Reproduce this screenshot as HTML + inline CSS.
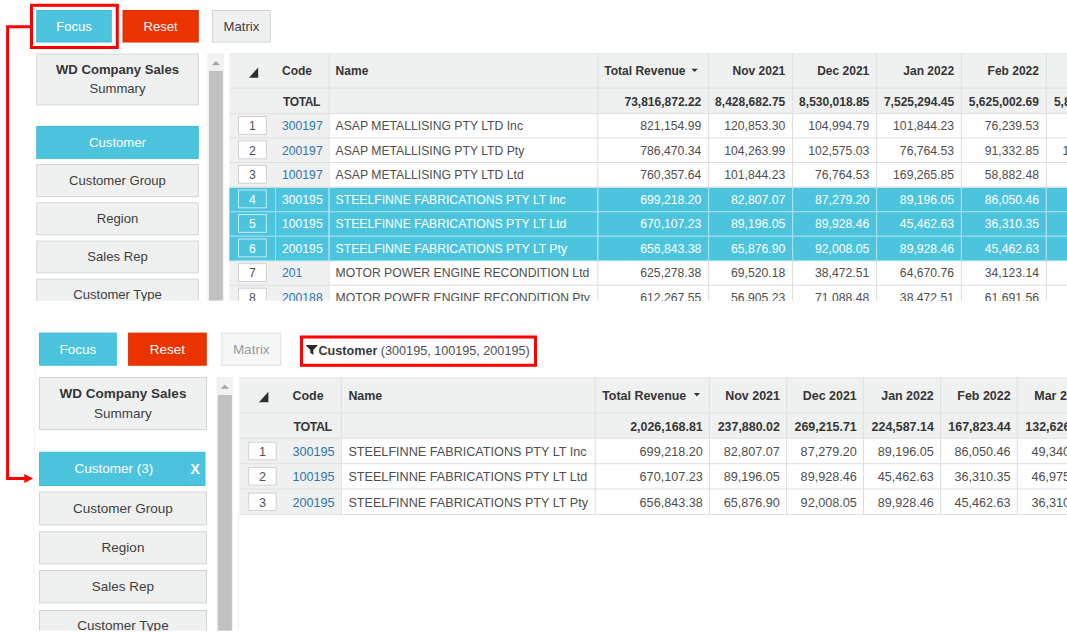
<!DOCTYPE html>
<html><head><meta charset="utf-8"><title>Focus</title>
<style>
html,body{margin:0;padding:0;background:#fff;}
body{width:1067px;height:633px;overflow:hidden;position:relative;font-family:"Liberation Sans",sans-serif;color:#4e4e4e;}
div,svg{position:absolute;white-space:nowrap;}
.clip{overflow:hidden;}
</style></head><body>
<svg style="left:0;top:0" width="1067" height="633" viewBox="0 0 1067 633"><defs><clipPath id="c1"><rect x="0" y="0" width="1067" height="300.7"/></clipPath></defs><g clip-path="url(#c1)"><rect x="36.75" y="10.50" width="74.50" height="31.50" fill="#4dc4de" stroke="#3fbcd8" stroke-width="1"/>
<rect x="123.00" y="10.50" width="75.25" height="31.50" fill="#eb3300" stroke="#de3000" stroke-width="1"/>
<rect x="212.50" y="10.50" width="57.80" height="31.50" fill="#eff0f0" stroke="#d3d5d5" stroke-width="1"/>
<rect x="36.75" y="54.10" width="161.50" height="50.90" fill="#eff0f0" stroke="#d3d5d5" stroke-width="1"/>
<rect x="36.75" y="126.40" width="161.50" height="32.00" fill="#4dc4de" stroke="#3fbcd8" stroke-width="1"/>
<rect x="36.75" y="164.60" width="161.50" height="32.10" fill="#eff0f0" stroke="#d3d5d5" stroke-width="1"/>
<rect x="36.75" y="202.80" width="161.50" height="32.00" fill="#eff0f0" stroke="#d3d5d5" stroke-width="1"/>
<rect x="36.75" y="241.00" width="161.50" height="31.90" fill="#eff0f0" stroke="#d3d5d5" stroke-width="1"/>
<rect x="36.75" y="279.20" width="161.50" height="32.00" fill="#eff0f0" stroke="#d3d5d5" stroke-width="1"/>
<rect x="207.30" y="53.40" width="16.70" height="247.30" fill="#f1f1f1"/>
<rect x="209.00" y="70.90" width="13.80" height="229.80" fill="#c1c1c1"/>
<polygon points="211.90,65.20 215.90,61.00 219.90,65.20" fill="#a6a6a6"/>
<rect x="229.40" y="53.40" width="837.60" height="59.70" fill="#eff0f0"/>
<rect x="229.40" y="113.10" width="99.20" height="187.60" fill="#eff0f0"/>
<rect x="229.40" y="187.60" width="837.60" height="24.50" fill="#4dc4de"/>
<rect x="229.40" y="212.10" width="837.60" height="24.50" fill="#4dc4de"/>
<rect x="229.40" y="236.60" width="837.60" height="24.50" fill="#4dc4de"/>
<rect x="229.40" y="87.60" width="837.60" height="1.00" fill="#dfe0e0"/>
<rect x="229.40" y="113.10" width="837.60" height="1.00" fill="#dfe0e0"/>
<rect x="229.40" y="137.50" width="99.20" height="1.00" fill="#dfe0e0"/>
<rect x="328.60" y="137.50" width="738.40" height="1.00" fill="#dcdddd"/>
<rect x="229.40" y="162.00" width="99.20" height="1.00" fill="#dfe0e0"/>
<rect x="328.60" y="162.00" width="738.40" height="1.00" fill="#dcdddd"/>
<rect x="229.40" y="186.60" width="99.20" height="1.00" fill="#dfe0e0"/>
<rect x="328.60" y="186.60" width="738.40" height="1.00" fill="#dcdddd"/>
<rect x="229.40" y="211.10" width="837.60" height="1.00" fill="#a2dfee"/>
<rect x="229.40" y="235.60" width="837.60" height="1.00" fill="#a2dfee"/>
<rect x="229.40" y="260.10" width="837.60" height="1.00" fill="#a2dfee"/>
<rect x="229.40" y="284.80" width="99.20" height="1.00" fill="#dfe0e0"/>
<rect x="328.60" y="284.80" width="738.40" height="1.00" fill="#dcdddd"/>
<rect x="229.40" y="53.40" width="837.60" height="1.00" fill="#e6e7e7"/>
<rect x="275.00" y="187.60" width="1.00" height="24.50" fill="#a2dfee"/>
<rect x="275.00" y="212.10" width="1.00" height="24.50" fill="#a2dfee"/>
<rect x="275.00" y="236.60" width="1.00" height="24.50" fill="#a2dfee"/>
<rect x="328.60" y="53.40" width="1.00" height="247.30" fill="#dfe0e0"/>
<rect x="328.60" y="187.60" width="1.00" height="24.50" fill="#a2dfee"/>
<rect x="328.60" y="212.10" width="1.00" height="24.50" fill="#a2dfee"/>
<rect x="328.60" y="236.60" width="1.00" height="24.50" fill="#a2dfee"/>
<rect x="597.30" y="53.40" width="1.00" height="59.70" fill="#dfe0e0"/>
<rect x="597.30" y="113.10" width="1.00" height="187.60" fill="#dcdddd"/>
<rect x="597.30" y="187.60" width="1.00" height="24.50" fill="#a2dfee"/>
<rect x="597.30" y="212.10" width="1.00" height="24.50" fill="#a2dfee"/>
<rect x="597.30" y="236.60" width="1.00" height="24.50" fill="#a2dfee"/>
<rect x="708.10" y="53.40" width="1.00" height="59.70" fill="#dfe0e0"/>
<rect x="708.10" y="113.10" width="1.00" height="187.60" fill="#dcdddd"/>
<rect x="708.10" y="187.60" width="1.00" height="24.50" fill="#a2dfee"/>
<rect x="708.10" y="212.10" width="1.00" height="24.50" fill="#a2dfee"/>
<rect x="708.10" y="236.60" width="1.00" height="24.50" fill="#a2dfee"/>
<rect x="792.10" y="53.40" width="1.00" height="59.70" fill="#dfe0e0"/>
<rect x="792.10" y="113.10" width="1.00" height="187.60" fill="#dcdddd"/>
<rect x="792.10" y="187.60" width="1.00" height="24.50" fill="#a2dfee"/>
<rect x="792.10" y="212.10" width="1.00" height="24.50" fill="#a2dfee"/>
<rect x="792.10" y="236.60" width="1.00" height="24.50" fill="#a2dfee"/>
<rect x="876.10" y="53.40" width="1.00" height="59.70" fill="#dfe0e0"/>
<rect x="876.10" y="113.10" width="1.00" height="187.60" fill="#dcdddd"/>
<rect x="876.10" y="187.60" width="1.00" height="24.50" fill="#a2dfee"/>
<rect x="876.10" y="212.10" width="1.00" height="24.50" fill="#a2dfee"/>
<rect x="876.10" y="236.60" width="1.00" height="24.50" fill="#a2dfee"/>
<rect x="960.90" y="53.40" width="1.00" height="59.70" fill="#dfe0e0"/>
<rect x="960.90" y="113.10" width="1.00" height="187.60" fill="#dcdddd"/>
<rect x="960.90" y="187.60" width="1.00" height="24.50" fill="#a2dfee"/>
<rect x="960.90" y="212.10" width="1.00" height="24.50" fill="#a2dfee"/>
<rect x="960.90" y="236.60" width="1.00" height="24.50" fill="#a2dfee"/>
<rect x="1045.80" y="53.40" width="1.00" height="59.70" fill="#dfe0e0"/>
<rect x="1045.80" y="113.10" width="1.00" height="187.60" fill="#dcdddd"/>
<rect x="1045.80" y="187.60" width="1.00" height="24.50" fill="#a2dfee"/>
<rect x="1045.80" y="212.10" width="1.00" height="24.50" fill="#a2dfee"/>
<rect x="1045.80" y="236.60" width="1.00" height="24.50" fill="#a2dfee"/>
<polygon points="249.00,77.70 258.20,67.40 258.20,77.70" fill="#2e2e2e"/>
<polygon points="691.40,68.80 697.80,68.80 694.60,72.00" fill="#333"/>
<rect x="238.50" y="116.50" width="27.80" height="17.80" fill="#fff" stroke="#d0d2d2" stroke-width="1"/>
<rect x="238.50" y="140.95" width="27.80" height="17.80" fill="#fff" stroke="#d0d2d2" stroke-width="1"/>
<rect x="238.50" y="165.50" width="27.80" height="17.80" fill="#fff" stroke="#d0d2d2" stroke-width="1"/>
<rect x="238.50" y="190.05" width="27.80" height="17.80" fill="none" stroke="#c4ebf4" stroke-width="1"/>
<rect x="238.50" y="214.55" width="27.80" height="17.80" fill="none" stroke="#c4ebf4" stroke-width="1"/>
<rect x="238.50" y="239.05" width="27.80" height="17.80" fill="none" stroke="#c4ebf4" stroke-width="1"/>
<rect x="238.50" y="263.65" width="27.80" height="17.80" fill="#fff" stroke="#d0d2d2" stroke-width="1"/>
<rect x="238.50" y="288.25" width="27.80" height="17.80" fill="#fff" stroke="#d0d2d2" stroke-width="1"/></g></svg>
<div class="clip" style="left:0;top:0px;width:1067px;height:300.7px"><div style="left:0;top:0px;width:1067px;height:633px"><div style="left:36.25px;top:10.00px;width:75.50px;height:32.50px;line-height:34.50px;color:#fff;text-align:center;font-size:13.1px;">Focus</div>
<div style="left:122.50px;top:10.00px;width:76.25px;height:32.50px;line-height:34.50px;color:#fff;text-align:center;font-size:13.1px;">Reset</div>
<div style="left:212.00px;top:10.00px;width:58.80px;height:32.50px;line-height:34.50px;color:#3e3e3e;text-align:center;font-size:13.1px;">Matrix</div>
<div style="left:36.25px;top:60.00px;width:162.50px;height:20.00px;line-height:20.00px;text-align:center;font-size:13.1px;color:#363636;"><b>WD Company Sales</b></div>
<div style="left:36.25px;top:79.00px;width:162.50px;height:20.00px;line-height:20.00px;text-align:center;font-size:13.1px;color:#3e3e3e;">Summary</div>
<div style="left:36.25px;top:125.90px;width:162.50px;height:33.00px;line-height:33.00px;text-align:center;font-size:13.1px;color:#3e3e3e;color:#fff;">Customer</div>
<div style="left:36.25px;top:164.10px;width:162.50px;height:33.10px;line-height:33.10px;text-align:center;font-size:13.1px;color:#3e3e3e;">Customer Group</div>
<div style="left:36.25px;top:202.30px;width:162.50px;height:33.00px;line-height:33.00px;text-align:center;font-size:13.1px;color:#3e3e3e;">Region</div>
<div style="left:36.25px;top:240.50px;width:162.50px;height:32.90px;line-height:32.90px;text-align:center;font-size:13.1px;color:#3e3e3e;">Sales Rep</div>
<div style="left:36.25px;top:278.70px;width:162.50px;height:33.00px;line-height:31.00px;text-align:center;font-size:13.1px;color:#3e3e3e;">Customer Type</div>
<div style="left:282.00px;top:53.40px;width:46.60px;height:34.20px;line-height:37.20px;font-size:12.02px;color:#363636;font-weight:bold;">Code</div>
<div style="left:335.60px;top:53.40px;width:261.70px;height:34.20px;line-height:37.20px;font-size:12.02px;color:#363636;font-weight:bold;">Name</div>
<div style="left:604.30px;top:53.40px;width:103.80px;height:34.20px;line-height:37.20px;font-size:12.02px;color:#363636;font-weight:bold;">Total Revenue</div>
<div style="left:708.10px;top:53.40px;width:77.20px;height:34.20px;line-height:37.20px;font-size:12.02px;color:#363636;font-weight:bold;text-align:right;">Nov 2021</div>
<div style="left:792.10px;top:53.40px;width:77.20px;height:34.20px;line-height:37.20px;font-size:12.02px;color:#363636;font-weight:bold;text-align:right;">Dec 2021</div>
<div style="left:876.10px;top:53.40px;width:78.00px;height:34.20px;line-height:37.20px;font-size:12.02px;color:#363636;font-weight:bold;text-align:right;">Jan 2022</div>
<div style="left:960.90px;top:53.40px;width:78.10px;height:34.20px;line-height:37.20px;font-size:12.02px;color:#363636;font-weight:bold;text-align:right;">Feb 2022</div>
<div style="left:1045.80px;top:53.40px;width:77.60px;height:34.20px;line-height:37.20px;font-size:12.02px;color:#363636;font-weight:bold;text-align:right;">Mar 2022</div>
<div style="left:282.00px;top:87.60px;width:46.60px;height:25.50px;line-height:29.00px;font-size:12.02px;color:#363636;font-weight:bold;"><span style="letter-spacing:-0.4px;margin-left:1px">TOTAL</span></div>
<div style="left:597.30px;top:87.60px;width:104.00px;height:25.50px;line-height:29.00px;font-size:12.02px;color:#363636;font-weight:bold;text-align:right;">73,816,872.22</div>
<div style="left:708.10px;top:87.60px;width:77.20px;height:25.50px;line-height:29.00px;font-size:12.02px;color:#363636;font-weight:bold;text-align:right;">8,428,682.75</div>
<div style="left:792.10px;top:87.60px;width:77.20px;height:25.50px;line-height:29.00px;font-size:12.02px;color:#363636;font-weight:bold;text-align:right;">8,530,018.85</div>
<div style="left:876.10px;top:87.60px;width:78.00px;height:25.50px;line-height:29.00px;font-size:12.02px;color:#363636;font-weight:bold;text-align:right;">7,525,294.45</div>
<div style="left:960.90px;top:87.60px;width:78.10px;height:25.50px;line-height:29.00px;font-size:12.02px;color:#363636;font-weight:bold;text-align:right;">5,625,002.69</div>
<div style="left:1045.80px;top:87.60px;width:77.60px;height:25.50px;line-height:29.00px;font-size:12.02px;color:#363636;font-weight:bold;text-align:right;">5,832,114.20</div>
<div style="left:238.00px;top:113.10px;width:28.80px;height:24.40px;line-height:26.00px;text-align:center;font-size:12.2px;color:#4e4e4e;">1</div>
<div style="left:282.00px;top:113.10px;width:46.60px;height:24.40px;line-height:26.00px;font-size:12.2px;color:#2e75ad;">300197</div>
<div style="left:335.60px;top:113.10px;width:261.70px;height:24.40px;line-height:26.00px;font-size:12.2px;color:#4e4e4e;">ASAP METALLISING PTY LTD Inc</div>
<div style="left:597.30px;top:113.10px;width:104.00px;height:24.40px;line-height:26.00px;font-size:12.2px;color:#4e4e4e;text-align:right;">821,154.99</div>
<div style="left:708.10px;top:113.10px;width:77.20px;height:24.40px;line-height:26.00px;font-size:12.2px;color:#4e4e4e;text-align:right;">120,853.30</div>
<div style="left:792.10px;top:113.10px;width:77.20px;height:24.40px;line-height:26.00px;font-size:12.2px;color:#4e4e4e;text-align:right;">104,994.79</div>
<div style="left:876.10px;top:113.10px;width:78.00px;height:24.40px;line-height:26.00px;font-size:12.2px;color:#4e4e4e;text-align:right;">101,844.23</div>
<div style="left:960.90px;top:113.10px;width:78.10px;height:24.40px;line-height:26.00px;font-size:12.2px;color:#4e4e4e;text-align:right;">76,239.53</div>
<div style="left:1045.80px;top:113.10px;width:77.60px;height:24.40px;line-height:26.00px;font-size:12.2px;color:#4e4e4e;text-align:right;">88,213.10</div>
<div style="left:238.00px;top:137.50px;width:28.80px;height:24.50px;line-height:26.10px;text-align:center;font-size:12.2px;color:#4e4e4e;">2</div>
<div style="left:282.00px;top:137.50px;width:46.60px;height:24.50px;line-height:26.10px;font-size:12.2px;color:#2e75ad;">200197</div>
<div style="left:335.60px;top:137.50px;width:261.70px;height:24.50px;line-height:26.10px;font-size:12.2px;color:#4e4e4e;">ASAP METALLISING PTY LTD Pty</div>
<div style="left:597.30px;top:137.50px;width:104.00px;height:24.50px;line-height:26.10px;font-size:12.2px;color:#4e4e4e;text-align:right;">786,470.34</div>
<div style="left:708.10px;top:137.50px;width:77.20px;height:24.50px;line-height:26.10px;font-size:12.2px;color:#4e4e4e;text-align:right;">104,263.99</div>
<div style="left:792.10px;top:137.50px;width:77.20px;height:24.50px;line-height:26.10px;font-size:12.2px;color:#4e4e4e;text-align:right;">102,575.03</div>
<div style="left:876.10px;top:137.50px;width:78.00px;height:24.50px;line-height:26.10px;font-size:12.2px;color:#4e4e4e;text-align:right;">76,764.53</div>
<div style="left:960.90px;top:137.50px;width:78.10px;height:24.50px;line-height:26.10px;font-size:12.2px;color:#4e4e4e;text-align:right;">91,332.85</div>
<div style="left:1045.80px;top:137.50px;width:77.60px;height:24.50px;line-height:26.10px;font-size:12.2px;color:#4e4e4e;text-align:right;">101,844.23</div>
<div style="left:238.00px;top:162.00px;width:28.80px;height:24.60px;line-height:26.20px;text-align:center;font-size:12.2px;color:#4e4e4e;">3</div>
<div style="left:282.00px;top:162.00px;width:46.60px;height:24.60px;line-height:26.20px;font-size:12.2px;color:#2e75ad;">100197</div>
<div style="left:335.60px;top:162.00px;width:261.70px;height:24.60px;line-height:26.20px;font-size:12.2px;color:#4e4e4e;">ASAP METALLISING PTY LTD Ltd</div>
<div style="left:597.30px;top:162.00px;width:104.00px;height:24.60px;line-height:26.20px;font-size:12.2px;color:#4e4e4e;text-align:right;">760,357.64</div>
<div style="left:708.10px;top:162.00px;width:77.20px;height:24.60px;line-height:26.20px;font-size:12.2px;color:#4e4e4e;text-align:right;">101,844.23</div>
<div style="left:792.10px;top:162.00px;width:77.20px;height:24.60px;line-height:26.20px;font-size:12.2px;color:#4e4e4e;text-align:right;">76,764.53</div>
<div style="left:876.10px;top:162.00px;width:78.00px;height:24.60px;line-height:26.20px;font-size:12.2px;color:#4e4e4e;text-align:right;">169,265.85</div>
<div style="left:960.90px;top:162.00px;width:78.10px;height:24.60px;line-height:26.20px;font-size:12.2px;color:#4e4e4e;text-align:right;">58,882.48</div>
<div style="left:1045.80px;top:162.00px;width:77.60px;height:24.60px;line-height:26.20px;font-size:12.2px;color:#4e4e4e;text-align:right;">64,670.76</div>
<div style="left:238.00px;top:186.60px;width:28.80px;height:24.50px;line-height:26.10px;text-align:center;font-size:12.2px;color:#fff;">4</div>
<div style="left:282.00px;top:186.60px;width:46.60px;height:24.50px;line-height:26.10px;font-size:12.2px;color:#fff;">300195</div>
<div style="left:335.60px;top:186.60px;width:261.70px;height:24.50px;line-height:26.10px;font-size:12.2px;color:#fff;">STEELFINNE FABRICATIONS PTY LT Inc</div>
<div style="left:597.30px;top:186.60px;width:104.00px;height:24.50px;line-height:26.10px;font-size:12.2px;color:#fff;text-align:right;">699,218.20</div>
<div style="left:708.10px;top:186.60px;width:77.20px;height:24.50px;line-height:26.10px;font-size:12.2px;color:#fff;text-align:right;">82,807.07</div>
<div style="left:792.10px;top:186.60px;width:77.20px;height:24.50px;line-height:26.10px;font-size:12.2px;color:#fff;text-align:right;">87,279.20</div>
<div style="left:876.10px;top:186.60px;width:78.00px;height:24.50px;line-height:26.10px;font-size:12.2px;color:#fff;text-align:right;">89,196.05</div>
<div style="left:960.90px;top:186.60px;width:78.10px;height:24.50px;line-height:26.10px;font-size:12.2px;color:#fff;text-align:right;">86,050.46</div>
<div style="left:1045.80px;top:186.60px;width:77.60px;height:24.50px;line-height:26.10px;font-size:12.2px;color:#fff;text-align:right;">49,340.12</div>
<div style="left:238.00px;top:211.10px;width:28.80px;height:24.50px;line-height:26.10px;text-align:center;font-size:12.2px;color:#fff;">5</div>
<div style="left:282.00px;top:211.10px;width:46.60px;height:24.50px;line-height:26.10px;font-size:12.2px;color:#fff;">100195</div>
<div style="left:335.60px;top:211.10px;width:261.70px;height:24.50px;line-height:26.10px;font-size:12.2px;color:#fff;">STEELFINNE FABRICATIONS PTY LT Ltd</div>
<div style="left:597.30px;top:211.10px;width:104.00px;height:24.50px;line-height:26.10px;font-size:12.2px;color:#fff;text-align:right;">670,107.23</div>
<div style="left:708.10px;top:211.10px;width:77.20px;height:24.50px;line-height:26.10px;font-size:12.2px;color:#fff;text-align:right;">89,196.05</div>
<div style="left:792.10px;top:211.10px;width:77.20px;height:24.50px;line-height:26.10px;font-size:12.2px;color:#fff;text-align:right;">89,928.46</div>
<div style="left:876.10px;top:211.10px;width:78.00px;height:24.50px;line-height:26.10px;font-size:12.2px;color:#fff;text-align:right;">45,462.63</div>
<div style="left:960.90px;top:211.10px;width:78.10px;height:24.50px;line-height:26.10px;font-size:12.2px;color:#fff;text-align:right;">36,310.35</div>
<div style="left:1045.80px;top:211.10px;width:77.60px;height:24.50px;line-height:26.10px;font-size:12.2px;color:#fff;text-align:right;">46,975.30</div>
<div style="left:238.00px;top:235.60px;width:28.80px;height:24.50px;line-height:26.10px;text-align:center;font-size:12.2px;color:#fff;">6</div>
<div style="left:282.00px;top:235.60px;width:46.60px;height:24.50px;line-height:26.10px;font-size:12.2px;color:#fff;">200195</div>
<div style="left:335.60px;top:235.60px;width:261.70px;height:24.50px;line-height:26.10px;font-size:12.2px;color:#fff;">STEELFINNE FABRICATIONS PTY LT Pty</div>
<div style="left:597.30px;top:235.60px;width:104.00px;height:24.50px;line-height:26.10px;font-size:12.2px;color:#fff;text-align:right;">656,843.38</div>
<div style="left:708.10px;top:235.60px;width:77.20px;height:24.50px;line-height:26.10px;font-size:12.2px;color:#fff;text-align:right;">65,876.90</div>
<div style="left:792.10px;top:235.60px;width:77.20px;height:24.50px;line-height:26.10px;font-size:12.2px;color:#fff;text-align:right;">92,008.05</div>
<div style="left:876.10px;top:235.60px;width:78.00px;height:24.50px;line-height:26.10px;font-size:12.2px;color:#fff;text-align:right;">89,928.46</div>
<div style="left:960.90px;top:235.60px;width:78.10px;height:24.50px;line-height:26.10px;font-size:12.2px;color:#fff;text-align:right;">45,462.63</div>
<div style="left:1045.80px;top:235.60px;width:77.60px;height:24.50px;line-height:26.10px;font-size:12.2px;color:#fff;text-align:right;">36,310.35</div>
<div style="left:238.00px;top:260.10px;width:28.80px;height:24.70px;line-height:26.30px;text-align:center;font-size:12.2px;color:#4e4e4e;">7</div>
<div style="left:282.00px;top:260.10px;width:46.60px;height:24.70px;line-height:26.30px;font-size:12.2px;color:#2e75ad;">201</div>
<div style="left:335.60px;top:260.10px;width:261.70px;height:24.70px;line-height:26.30px;font-size:12.2px;color:#4e4e4e;">MOTOR POWER ENGINE RECONDITION Ltd</div>
<div style="left:597.30px;top:260.10px;width:104.00px;height:24.70px;line-height:26.30px;font-size:12.2px;color:#4e4e4e;text-align:right;">625,278.38</div>
<div style="left:708.10px;top:260.10px;width:77.20px;height:24.70px;line-height:26.30px;font-size:12.2px;color:#4e4e4e;text-align:right;">69,520.18</div>
<div style="left:792.10px;top:260.10px;width:77.20px;height:24.70px;line-height:26.30px;font-size:12.2px;color:#4e4e4e;text-align:right;">38,472.51</div>
<div style="left:876.10px;top:260.10px;width:78.00px;height:24.70px;line-height:26.30px;font-size:12.2px;color:#4e4e4e;text-align:right;">64,670.76</div>
<div style="left:960.90px;top:260.10px;width:78.10px;height:24.70px;line-height:26.30px;font-size:12.2px;color:#4e4e4e;text-align:right;">34,123.14</div>
<div style="left:1045.80px;top:260.10px;width:77.60px;height:24.70px;line-height:26.30px;font-size:12.2px;color:#4e4e4e;text-align:right;">56,905.23</div>
<div style="left:238.00px;top:284.80px;width:28.80px;height:24.50px;line-height:26.10px;text-align:center;font-size:12.2px;color:#4e4e4e;">8</div>
<div style="left:282.00px;top:284.80px;width:46.60px;height:24.50px;line-height:26.10px;font-size:12.2px;color:#2e75ad;">200188</div>
<div style="left:335.60px;top:284.80px;width:261.70px;height:24.50px;line-height:26.10px;font-size:12.2px;color:#4e4e4e;">MOTOR POWER ENGINE RECONDITION Pty</div>
<div style="left:597.30px;top:284.80px;width:104.00px;height:24.50px;line-height:26.10px;font-size:12.2px;color:#4e4e4e;text-align:right;">612,267.55</div>
<div style="left:708.10px;top:284.80px;width:77.20px;height:24.50px;line-height:26.10px;font-size:12.2px;color:#4e4e4e;text-align:right;">56,905.23</div>
<div style="left:792.10px;top:284.80px;width:77.20px;height:24.50px;line-height:26.10px;font-size:12.2px;color:#4e4e4e;text-align:right;">71,088.48</div>
<div style="left:876.10px;top:284.80px;width:78.00px;height:24.50px;line-height:26.10px;font-size:12.2px;color:#4e4e4e;text-align:right;">38,472.51</div>
<div style="left:960.90px;top:284.80px;width:78.10px;height:24.50px;line-height:26.10px;font-size:12.2px;color:#4e4e4e;text-align:right;">61,691.56</div>
<div style="left:1045.80px;top:284.80px;width:77.60px;height:24.50px;line-height:26.10px;font-size:12.2px;color:#4e4e4e;text-align:right;">69,520.18</div></div></div>
<svg style="left:0;top:0" width="1067" height="633" viewBox="0 0 1067 633"><defs><clipPath id="c2"><rect x="0" y="320" width="1067" height="310.79999999999995"/></clipPath></defs><g clip-path="url(#c2)"><rect x="33.3" y="325" width="2.5" height="306" fill="#fafafa"/>
<rect x="238.2" y="514" width="1" height="117" fill="#eeefef"/>
<rect x="39.50" y="333.10" width="76.80" height="32.10" fill="#4dc4de" stroke="#3fbcd8" stroke-width="1"/>
<rect x="128.60" y="333.10" width="77.65" height="32.10" fill="#eb3300" stroke="#de3000" stroke-width="1"/>
<rect x="221.75" y="333.10" width="59.00" height="32.10" fill="#f6f7f7" stroke="#dddfdf" stroke-width="1"/>
<rect x="39.50" y="377.50" width="167.00" height="52.25" fill="#eff0f0" stroke="#d3d5d5" stroke-width="1"/>
<rect x="39.50" y="452.25" width="165.50" height="33.25" fill="#4dc4de" stroke="#3fbcd8" stroke-width="1"/>
<rect x="185.00" y="452.75" width="1.00" height="32.25" fill="#44bcd8"/>
<rect x="39.50" y="492.00" width="167.00" height="33.00" fill="#eff0f0" stroke="#d3d5d5" stroke-width="1"/>
<rect x="39.50" y="531.75" width="167.00" height="32.00" fill="#eff0f0" stroke="#d3d5d5" stroke-width="1"/>
<rect x="39.50" y="570.50" width="167.00" height="32.50" fill="#eff0f0" stroke="#d3d5d5" stroke-width="1"/>
<rect x="39.50" y="610.50" width="167.00" height="33.00" fill="#eff0f0" stroke="#d3d5d5" stroke-width="1"/>
<rect x="216.50" y="377.00" width="16.50" height="253.80" fill="#f1f1f1"/>
<rect x="217.80" y="395.00" width="14.10" height="235.80" fill="#c1c1c1"/>
<polygon points="220.75,388.80 224.85,384.50 228.95,388.80" fill="#a6a6a6"/>
<rect x="239.20" y="377.00" width="827.80" height="60.80" fill="#eff0f0"/>
<rect x="239.20" y="437.80" width="101.70" height="76.30" fill="#eff0f0"/>
<rect x="239.20" y="412.50" width="827.80" height="1.00" fill="#dfe0e0"/>
<rect x="239.20" y="437.80" width="827.80" height="1.00" fill="#dfe0e0"/>
<rect x="239.20" y="463.20" width="101.70" height="1.00" fill="#dfe0e0"/>
<rect x="340.90" y="463.20" width="726.10" height="1.00" fill="#dcdddd"/>
<rect x="239.20" y="488.50" width="101.70" height="1.00" fill="#dfe0e0"/>
<rect x="340.90" y="488.50" width="726.10" height="1.00" fill="#dcdddd"/>
<rect x="239.20" y="514.10" width="101.70" height="1.00" fill="#dfe0e0"/>
<rect x="340.90" y="514.10" width="726.10" height="1.00" fill="#dcdddd"/>
<rect x="239.20" y="377.00" width="827.80" height="1.00" fill="#e6e7e7"/>
<rect x="340.90" y="377.00" width="1.00" height="137.10" fill="#dfe0e0"/>
<rect x="594.70" y="377.00" width="1.00" height="60.80" fill="#dfe0e0"/>
<rect x="594.70" y="437.80" width="1.00" height="76.30" fill="#dcdddd"/>
<rect x="709.00" y="377.00" width="1.00" height="60.80" fill="#dfe0e0"/>
<rect x="709.00" y="437.80" width="1.00" height="76.30" fill="#dcdddd"/>
<rect x="786.10" y="377.00" width="1.00" height="60.80" fill="#dfe0e0"/>
<rect x="786.10" y="437.80" width="1.00" height="76.30" fill="#dcdddd"/>
<rect x="863.00" y="377.00" width="1.00" height="60.80" fill="#dfe0e0"/>
<rect x="863.00" y="437.80" width="1.00" height="76.30" fill="#dcdddd"/>
<rect x="940.00" y="377.00" width="1.00" height="60.80" fill="#dfe0e0"/>
<rect x="940.00" y="437.80" width="1.00" height="76.30" fill="#dcdddd"/>
<rect x="1016.80" y="377.00" width="1.00" height="60.80" fill="#dfe0e0"/>
<rect x="1016.80" y="437.80" width="1.00" height="76.30" fill="#dcdddd"/>
<polygon points="259.00,402.30 268.40,391.70 268.40,402.30" fill="#2e2e2e"/>
<polygon points="693.90,392.90 699.90,392.90 696.90,396.40" fill="#333"/>
<rect x="248.70" y="442.25" width="27.50" height="17.50" fill="#fff" stroke="#d0d2d2" stroke-width="1"/>
<rect x="248.70" y="467.60" width="27.50" height="17.50" fill="#fff" stroke="#d0d2d2" stroke-width="1"/>
<rect x="248.70" y="493.05" width="27.50" height="17.50" fill="#fff" stroke="#d0d2d2" stroke-width="1"/></g></svg>
<div class="clip" style="left:0;top:320px;width:1067px;height:310.79999999999995px"><div style="left:0;top:-320px;width:1067px;height:633px"><div style="left:39.00px;top:332.60px;width:77.80px;height:33.10px;line-height:33.10px;color:#fff;text-align:center;font-size:13.5px;">Focus</div>
<div style="left:128.10px;top:332.60px;width:78.65px;height:33.10px;line-height:33.10px;color:#fff;text-align:center;font-size:13.5px;">Reset</div>
<div style="left:221.25px;top:332.60px;width:60.00px;height:33.10px;line-height:33.10px;color:#9a9a9a;text-align:center;font-size:13.5px;">Matrix</div>
<div style="left:39.00px;top:384.00px;width:168.00px;height:20.00px;line-height:20.00px;text-align:center;font-size:13.5px;color:#363636;"><b>WD Company Sales</b></div>
<div style="left:39.00px;top:403.50px;width:168.00px;height:20.00px;line-height:20.00px;text-align:center;font-size:13.5px;color:#3e3e3e;">Summary</div>
<div style="left:39.00px;top:451.75px;width:149.80px;height:34.25px;line-height:34.25px;text-align:center;font-size:13.5px;color:#3e3e3e;color:#fff;">Customer (3)</div>
<div style="left:185.00px;top:451.75px;width:20.50px;height:34.25px;line-height:34.25px;text-align:center;font-size:13.5px;color:#3e3e3e;color:#fff;font-weight:bold;font-size:14px;">X</div>
<div style="left:39.00px;top:491.50px;width:168.00px;height:34.00px;line-height:34.00px;text-align:center;font-size:13.5px;color:#3e3e3e;">Customer Group</div>
<div style="left:39.00px;top:531.25px;width:168.00px;height:33.00px;line-height:33.00px;text-align:center;font-size:13.5px;color:#3e3e3e;">Region</div>
<div style="left:39.00px;top:570.00px;width:168.00px;height:33.50px;line-height:33.50px;text-align:center;font-size:13.5px;color:#3e3e3e;">Sales Rep</div>
<div style="left:39.00px;top:610.00px;width:168.00px;height:34.00px;line-height:32.00px;text-align:center;font-size:13.5px;color:#3e3e3e;">Customer Type</div>
<div style="left:292.50px;top:377.00px;width:48.40px;height:35.50px;line-height:39.50px;font-size:12.44px;color:#363636;font-weight:bold;">Code</div>
<div style="left:348.40px;top:377.00px;width:246.30px;height:35.50px;line-height:39.50px;font-size:12.44px;color:#363636;font-weight:bold;">Name</div>
<div style="left:602.20px;top:377.00px;width:106.80px;height:35.50px;line-height:39.50px;font-size:12.44px;color:#363636;font-weight:bold;">Total Revenue</div>
<div style="left:709.00px;top:377.00px;width:70.90px;height:35.50px;line-height:39.50px;font-size:12.44px;color:#363636;font-weight:bold;text-align:right;">Nov 2021</div>
<div style="left:786.10px;top:377.00px;width:70.70px;height:35.50px;line-height:39.50px;font-size:12.44px;color:#363636;font-weight:bold;text-align:right;">Dec 2021</div>
<div style="left:863.00px;top:377.00px;width:70.80px;height:35.50px;line-height:39.50px;font-size:12.44px;color:#363636;font-weight:bold;text-align:right;">Jan 2022</div>
<div style="left:940.00px;top:377.00px;width:70.60px;height:35.50px;line-height:39.50px;font-size:12.44px;color:#363636;font-weight:bold;text-align:right;">Feb 2022</div>
<div style="left:1016.80px;top:377.00px;width:70.80px;height:35.50px;line-height:39.50px;font-size:12.44px;color:#363636;font-weight:bold;text-align:right;">Mar 2022</div>
<div style="left:292.50px;top:412.50px;width:48.40px;height:25.30px;line-height:29.30px;font-size:12.44px;color:#363636;font-weight:bold;"><span style="letter-spacing:-0.4px;margin-left:1px">TOTAL</span></div>
<div style="left:594.70px;top:412.50px;width:108.10px;height:25.30px;line-height:29.30px;font-size:12.44px;color:#363636;font-weight:bold;text-align:right;">2,026,168.81</div>
<div style="left:709.00px;top:412.50px;width:70.90px;height:25.30px;line-height:29.30px;font-size:12.44px;color:#363636;font-weight:bold;text-align:right;">237,880.02</div>
<div style="left:786.10px;top:412.50px;width:70.70px;height:25.30px;line-height:29.30px;font-size:12.44px;color:#363636;font-weight:bold;text-align:right;">269,215.71</div>
<div style="left:863.00px;top:412.50px;width:70.80px;height:25.30px;line-height:29.30px;font-size:12.44px;color:#363636;font-weight:bold;text-align:right;">224,587.14</div>
<div style="left:940.00px;top:412.50px;width:70.60px;height:25.30px;line-height:29.30px;font-size:12.44px;color:#363636;font-weight:bold;text-align:right;">167,823.44</div>
<div style="left:1016.80px;top:412.50px;width:70.80px;height:25.30px;line-height:29.30px;font-size:12.44px;color:#363636;font-weight:bold;text-align:right;">132,626.17</div>
<div style="left:248.20px;top:437.80px;width:28.50px;height:25.40px;line-height:29.40px;text-align:center;font-size:12.63px;color:#4e4e4e;">1</div>
<div style="left:292.50px;top:437.80px;width:48.40px;height:25.40px;line-height:29.40px;font-size:12.63px;color:#2e75ad;">300195</div>
<div style="left:348.40px;top:437.80px;width:246.30px;height:25.40px;line-height:29.40px;font-size:12.63px;color:#4e4e4e;">STEELFINNE FABRICATIONS PTY LT Inc</div>
<div style="left:594.70px;top:437.80px;width:108.10px;height:25.40px;line-height:29.40px;font-size:12.63px;color:#4e4e4e;text-align:right;">699,218.20</div>
<div style="left:709.00px;top:437.80px;width:70.90px;height:25.40px;line-height:29.40px;font-size:12.63px;color:#4e4e4e;text-align:right;">82,807.07</div>
<div style="left:786.10px;top:437.80px;width:70.70px;height:25.40px;line-height:29.40px;font-size:12.63px;color:#4e4e4e;text-align:right;">87,279.20</div>
<div style="left:863.00px;top:437.80px;width:70.80px;height:25.40px;line-height:29.40px;font-size:12.63px;color:#4e4e4e;text-align:right;">89,196.05</div>
<div style="left:940.00px;top:437.80px;width:70.60px;height:25.40px;line-height:29.40px;font-size:12.63px;color:#4e4e4e;text-align:right;">86,050.46</div>
<div style="left:1016.80px;top:437.80px;width:70.80px;height:25.40px;line-height:29.40px;font-size:12.63px;color:#4e4e4e;text-align:right;">49,340.12</div>
<div style="left:248.20px;top:463.20px;width:28.50px;height:25.30px;line-height:29.30px;text-align:center;font-size:12.63px;color:#4e4e4e;">2</div>
<div style="left:292.50px;top:463.20px;width:48.40px;height:25.30px;line-height:29.30px;font-size:12.63px;color:#2e75ad;">100195</div>
<div style="left:348.40px;top:463.20px;width:246.30px;height:25.30px;line-height:29.30px;font-size:12.63px;color:#4e4e4e;">STEELFINNE FABRICATIONS PTY LT Ltd</div>
<div style="left:594.70px;top:463.20px;width:108.10px;height:25.30px;line-height:29.30px;font-size:12.63px;color:#4e4e4e;text-align:right;">670,107.23</div>
<div style="left:709.00px;top:463.20px;width:70.90px;height:25.30px;line-height:29.30px;font-size:12.63px;color:#4e4e4e;text-align:right;">89,196.05</div>
<div style="left:786.10px;top:463.20px;width:70.70px;height:25.30px;line-height:29.30px;font-size:12.63px;color:#4e4e4e;text-align:right;">89,928.46</div>
<div style="left:863.00px;top:463.20px;width:70.80px;height:25.30px;line-height:29.30px;font-size:12.63px;color:#4e4e4e;text-align:right;">45,462.63</div>
<div style="left:940.00px;top:463.20px;width:70.60px;height:25.30px;line-height:29.30px;font-size:12.63px;color:#4e4e4e;text-align:right;">36,310.35</div>
<div style="left:1016.80px;top:463.20px;width:70.80px;height:25.30px;line-height:29.30px;font-size:12.63px;color:#4e4e4e;text-align:right;">46,975.30</div>
<div style="left:248.20px;top:488.50px;width:28.50px;height:25.60px;line-height:29.60px;text-align:center;font-size:12.63px;color:#4e4e4e;">3</div>
<div style="left:292.50px;top:488.50px;width:48.40px;height:25.60px;line-height:29.60px;font-size:12.63px;color:#2e75ad;">200195</div>
<div style="left:348.40px;top:488.50px;width:246.30px;height:25.60px;line-height:29.60px;font-size:12.63px;color:#4e4e4e;">STEELFINNE FABRICATIONS PTY LT Pty</div>
<div style="left:594.70px;top:488.50px;width:108.10px;height:25.60px;line-height:29.60px;font-size:12.63px;color:#4e4e4e;text-align:right;">656,843.38</div>
<div style="left:709.00px;top:488.50px;width:70.90px;height:25.60px;line-height:29.60px;font-size:12.63px;color:#4e4e4e;text-align:right;">65,876.90</div>
<div style="left:786.10px;top:488.50px;width:70.70px;height:25.60px;line-height:29.60px;font-size:12.63px;color:#4e4e4e;text-align:right;">92,008.05</div>
<div style="left:863.00px;top:488.50px;width:70.80px;height:25.60px;line-height:29.60px;font-size:12.63px;color:#4e4e4e;text-align:right;">89,928.46</div>
<div style="left:940.00px;top:488.50px;width:70.60px;height:25.60px;line-height:29.60px;font-size:12.63px;color:#4e4e4e;text-align:right;">45,462.63</div>
<div style="left:1016.80px;top:488.50px;width:70.80px;height:25.60px;line-height:29.60px;font-size:12.63px;color:#4e4e4e;text-align:right;">36,310.35</div></div></div>
<svg style="left:305.9px;top:344.9px" width="12" height="10" viewBox="0 0 12 10"><polygon points="0.3,0 11.3,0 11.6,0.6 7.3,4.9 7.3,9.9 4.3,7.7 4.3,4.9 0,0.6" fill="#2a2a2a"/></svg><div style="left:318.4px;top:336px;height:31px;line-height:31px;font-size:12.63px;color:#4e4e4e;white-space:nowrap"><b style="color:#3a3a3a">Customer</b> (300195, 100195, 200195)</div>
<svg style="left:0;top:0" width="1067" height="633" viewBox="0 0 1067 633" fill="none" stroke="#ff0000" stroke-width="3"><rect x="31.5" y="5.3" width="85.8" height="42.2"/><rect x="301.5" y="337" width="234" height="28.3"/><path d="M30 26.7 H7.6 V478.5 H25"/><polygon points="24.3,474 33.1,478.5 24.3,483" fill="#ff0000" stroke="none"/></svg>
</body></html>
